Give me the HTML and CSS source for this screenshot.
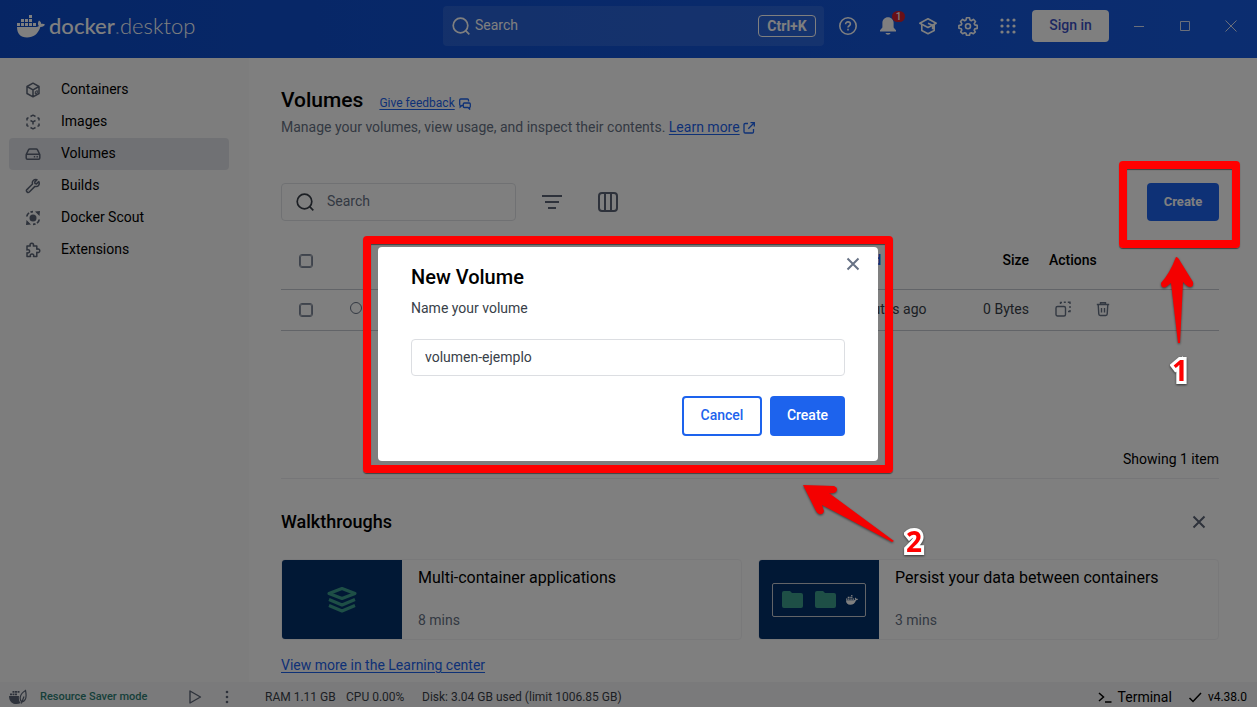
FILE: index.html
```html
<!DOCTYPE html>
<html lang="en">
<head>
<meta charset="utf-8">
<title>Docker Desktop - Volumes</title>
<link rel="stylesheet" href="styles.css">
</head>
<body>
<svg class="defs" aria-hidden="true">
  <defs>
    <symbol id="whale" viewBox="0 0 28 23">
      <path d="M12 0h3v3h-3zM4 4h3v3H4zM8 4h3v3H8zM12 4h3v3h-3zM0 8h3v3H0zM4 8h3v3H4zM8 8h3v3H8zM12 8h3v3h-3zM16 8h3v3h-3z"/>
      <path d="M0 12h18.500c1.500 0 2.600-.4 3.300-1-1.200-1.700-1-4 .2-5.500 1.400.9 2.200 2 2.300 3.500 1.400-.3 2.700-.1 3.700.6-.8 1.700-2.300 2.500-4.600 2.400C21 19 16.500 22.500 10 22.500 3.500 22.500 0 18.500 0 12z"/>
    </symbol>
    <symbol id="search" viewBox="0 0 18 18"><g fill="none" stroke="currentColor" stroke-width="1.700"><circle cx="8.500" cy="8.500" r="7.300"/><path d="M13.700 13.700l3.600 3.600"/></g></symbol>
    <symbol id="close" viewBox="0 0 14 14"><path d="M1.500 1.500l11 11M12.500 1.500l-11 11" fill="none" stroke="currentColor" stroke-width="2"/></symbol>
  </defs>
</svg>

<div class="app">
  <header class="topbar">
    <a class="brand" href="#"><svg class="brand-whale"><use href="#whale"/></svg><span class="brand-name"><b>docker</b><i>.</i>desktop</span></a>
    <label class="global-search">
      <svg class="icon18"><use href="#search"/></svg>
      <input type="text" placeholder="Search" aria-label="Search">
      <kbd>Ctrl+K</kbd>
    </label>
    <div class="top-actions">
      <button class="top-icon" aria-label="Help"><svg viewBox="0 0 20 20" fill="none" stroke="currentColor" stroke-width="1.600"><circle cx="10" cy="10" r="8.200"/><path d="M7.600 8.200c0-1.400 1-2.300 2.400-2.300s2.400.9 2.400 2.100c0 1.700-2.400 1.800-2.400 3.500"/><path d="M10 12.800v1.600"/></svg></button>
      <button class="top-icon" aria-label="Notifications"><svg viewBox="0 0 20 20" fill="currentColor"><path d="M10 1.200c-3.300 0-5.600 2.500-5.600 5.800v4.600L2 14.300V15.500h16v-1.200l-2.400-2.700V7c0-3.300-2.300-5.800-5.600-5.800zM7.500 17h5c-.3 1-1.200 1.700-2.500 1.700S7.800 18 7.500 17z"/></svg><span class="badge">1</span></button>
      <button class="top-icon" aria-label="Learning center"><svg viewBox="0 0 20 20" fill="none" stroke="currentColor" stroke-width="1.600" stroke-linejoin="round"><path d="M10 2.800L1.800 7.200 10 11.500l8.200-4.300z"/><path d="M3.800 8.500v6L10 17.700l6.200-3.200v-6M10 7.200l4.600 2v4"/></svg></button>
      <button class="top-icon" aria-label="Settings"><svg viewBox="0 0 20 20" fill="none" stroke="currentColor" stroke-width="1.600" stroke-linejoin="round"><path d="M8.500 1.700h3l.5 2.400 1.300.6 2.100-1.300 2.100 2.100-1.300 2.100.6 1.300 2.400.5v3l-2.400.5-.6 1.300 1.100 1.700-1.900 1.900-2.100-1.100-1.300.5-.5 2.200h-3l-.5-2.200-1.300-.5-2.100 1.100-1.900-1.900 1.100-1.900-.5-1.200-2.400-.5v-2.800l2.400-.6.5-1.300-1.300-2.100 2.100-2.100 2.100 1.300 1.300-.6z"/><circle cx="10" cy="10.300" r="2.500"/></svg></button>
      <button class="top-icon" aria-label="Apps"><svg viewBox="0 0 20 20" fill="currentColor"><g id="dots"><circle cx="4" cy="4" r="1.600"/><circle cx="10" cy="4" r="1.600"/><circle cx="16" cy="4" r="1.600"/></g><use href="#dots" y="6"/><use href="#dots" y="12"/></svg></button>
    </div>
    <button class="sign-in">Sign in</button>
    <div class="window-controls">
      <button aria-label="Minimize"><svg viewBox="0 0 12 12"><path d="M1 6.500h10"/></svg></button>
      <button aria-label="Maximize"><svg viewBox="0 0 12 12"><path d="M1.500 1.500h9v9h-9z"/></svg></button>
      <button aria-label="Close window"><svg viewBox="0 0 12 12"><path d="M.5 .5l11 11M11.500 .5l-11 11"/></svg></button>
    </div>
  </header>

  <div class="body">
    <nav class="sidebar">
      <a href="#"><svg viewBox="0 0 16 16"><path d="M8 1.200l6 3.300v7L8 14.800l-6-3.300v-7zM2 4.500l6 3.300 6-3.300M8 7.800v7"/><path d="M10.300 9.700l2-1.100v2.300l-2 1.100z" stroke-width="1"/></svg>Containers</a>
      <a href="#"><svg viewBox="0 0 16 16"><path d="M5.500 2.500L8 1.200l2.500 1.300M12.500 3.700L14 4.500v2M14 9.500v2l-1.500.8M10.500 13.500L8 14.800l-2.500-1.300M3.500 12.300L2 11.500v-2M2 6.500v-2l1.500-.8M5.500 6.500L8 7.800l2.500-1.300M8 7.800v2.700"/></svg>Images</a>
      <a href="#" class="active"><svg viewBox="0 0 16 16"><path d="M1.200 8.500l2.300-4.700c.3-.6.700-.8 1.300-.8h6.400c.6 0 1 .2 1.300.8l2.300 4.700v3.500c0 .8-.4 1.200-1.200 1.200H2.400c-.8 0-1.200-.4-1.200-1.200zM1.200 8.300h13.600M8.800 10.800h1.400M11.500 10.800h1.400"/></svg>Volumes</a>
      <a href="#"><svg viewBox="0 0 16 16"><path d="M13.800 3.600l-2.300 2.300-1.500-.3-.3-1.500L12 1.800c-3-1-5.300 1.300-4.500 4.200l-5.600 5.600c-1.400 1.500.9 3.800 2.400 2.400l5.600-5.600c3 .9 5.300-1.800 3.900-4.800z"/><path d="M3.300 12.600h.2"/></svg>Builds</a>
      <a href="#"><svg viewBox="0 0 16 16"><circle cx="8" cy="8" r="3.500" fill="currentColor" stroke="none"/><path d="M1.800 6.500C2 5 2.800 3.800 4 2.900M5.500 2.100C6.300 1.800 7 1.700 8 1.700M14.200 9.500c-.2 1.500-1 2.700-2.200 3.600M10.500 13.900c-.8.300-1.500.4-2.500.4" stroke-width="1.800"/><path d="M10 1.500l5-.5-.5 5zM1 15l.5-5L6 14.500z" fill="currentColor" stroke="none"/></svg>Docker Scout</a>
      <a href="#"><svg viewBox="0 0 16 16"><path d="M2 4h3.300c-.7-1.600.2-2.800 1.500-2.800S9 2.400 8.300 4h3.500v3.300c1.700-.7 3 .1 3 1.500s-1.300 2.200-3 1.500v4.200H8.500c.6-1.500-.2-2.500-1.500-2.500s-2.100 1-1.500 2.500H2v-3.700c1.600.5 2.600-.3 2.600-1.500S3.600 7.300 2 7.900z"/></svg>Extensions</a>
    </nav>

    <main class="content">
      <div class="title-row"><h1>Volumes</h1><a class="feedback" href="#">Give feedback</a><svg class="icon12" viewBox="0 0 12 12"><path d="M3.800 7.500H2.800L1.200 9V7.500Q.7 7 .7 6.500V2Q.7 1 1.700 1H8.500q1 0 1 1v1.500M5.300 5h5q1 0 1 1v2.500q0 .8-.7 1v1.600L9 9.500H5.300q-1 0-1-1V6q0-1 1-1z"/></svg></div>
      <p class="subtitle">Manage your volumes, view usage, and inspect their contents. <a href="#">Learn more</a> <svg class="icon12" viewBox="0 0 12 12"><path d="M5 1.500H2.200C1.400 1.500 1 2 1 2.600v7.200c0 .8.400 1.200 1.200 1.200h7.200c.7 0 1.100-.4 1.100-1.200V7M7.500.7h3.800v3.800M11 1L5.300 6.700"/></svg></p>

      <div class="toolbar">
        <label class="filter-search"><svg class="icon18"><use href="#search"/></svg><input type="text" placeholder="Search" aria-label="Search volumes"></label>
        <button class="tool" aria-label="Filter"><svg viewBox="0 0 20 20"><path d="M0 4h20M3 10h14M6 16h8"/></svg></button>
        <button class="tool" aria-label="Columns"><svg viewBox="0 0 20 20"><rect x="1" y="1" width="18" height="18" rx="3"/><path d="M7 1v18M13 1v18"/></svg></button>
        <div class="create-wrap">
          <button class="create-main">Create</button>
          <div class="mark mark-one">
            <svg class="arrow-up" viewBox="0 0 40 90" aria-hidden="true"><path d="M16 2Q18 2 20 6L33 27Q34 32 30 32Q28 32 26 30L23 27L20 88H18L11 28L6 32Q1 34 1 28Q10 18 16 2z"/></svg>
            <span class="digit">1</span>
          </div>
        </div>
      </div>

      <table class="volumes">
        <colgroup><col class="c-check"><col class="c-status"><col><col class="c-created"><col class="c-size"><col class="c-actions"></colgroup>
        <thead><tr><th class="center"><input type="checkbox" aria-label="Select all"></th><th></th><th></th><th class="sorted">Created</th><th class="right">Size</th><th>Actions</th></tr></thead>
        <tbody><tr>
          <td class="center"><input type="checkbox" aria-label="Select volume"></td>
          <td class="center"><span class="status"></span></td><td></td>
          <td>32 minutes ago</td><td class="right">0 Bytes</td>
          <td><div class="row-actions">
            <button aria-label="Clone"><svg viewBox="0 0 16 16"><rect x="1" y="5.500" width="9.500" height="9.500" rx="1.500"/><path d="M5.500 3V1.500H7M8.800 1.200h2M12.800 1.200H15V3M15 5v2M15 9v1.500h-2"/></svg></button>
            <button aria-label="Delete"><svg viewBox="0 0 16 16"><path d="M1.800 3.500h12.400M5.500 3V1.700h5V3M3.200 3.500l.6 9.600c0 .9.600 1.400 1.400 1.400h5.600c.8 0 1.400-.5 1.400-1.400l.6-9.600M6.500 7v4.500M9.500 7v4.500"/></svg></button>
          </div></td>
        </tr></tbody>
      </table>
      <p class="count">Showing 1 item</p>

      <section class="walkthroughs">
        <div class="section-head"><h2>Walkthroughs</h2><button aria-label="Dismiss walkthroughs"><svg class="icon14"><use href="#close"/></svg></button></div>
        <div class="cards">
          <article class="card"><div class="art"><svg class="layers" viewBox="0 0 30 26"><path d="M15 1.500L28 6.500 15 11.500 2 6.500zM2 12.500l13 5.500 13-5.500M2 18.500L15 24l13-5.500"/></svg></div><div class="card-text"><h3>Multi-container applications</h3><p>8 mins</p></div></article>
          <article class="card"><div class="art"><div class="folders"><svg viewBox="0 0 21 17"><path d="M2 0h6l2 2h9q2 0 2 2v11q0 2-2 2H2q-2 0-2-2V2q0-2 2-2z"/></svg><svg viewBox="0 0 21 17"><path d="M2 0h6l2 2h9q2 0 2 2v11q0 2-2 2H2q-2 0-2-2V2q0-2 2-2z"/></svg><svg class="mini-whale"><use href="#whale"/></svg></div></div><div class="card-text"><h3>Persist your data between containers</h3><p>3 mins</p></div></article>
        </div>
        <a class="more" href="#">View more in the Learning center</a>
      </section>
    </main>
  </div>

  <footer class="statusbar">
    <div class="engine">
      <svg class="saver" viewBox="0 0 18 16"><path d="M0 7h10c-.5 4 .5 6 2 7-5 2.500-12 1-12-7zM1 4.500h2V6.300H1zM3.500 4.500h2V6.300h-2zM6 4.500h2V6.300H6zM3.500 2h2v1.800h-2zM6 2h2v1.800H6zM8.500 2h2v1.800h-2z" fill="currentColor"/><path d="M16.500 1.500c1.300 6 .3 10.500-3.500 11.500-3-2.500-2.500-8 3.500-11.500zM12.300 14.500l2.700-7" fill="none" stroke="currentColor" stroke-width="1.200"/></svg>
      <span class="mode">Resource Saver mode</span>
      <button aria-label="Start"><svg class="icon14" viewBox="0 0 14 14"><path d="M2 1l10.500 6L2 13z" fill="none" stroke="currentColor" stroke-width="1.400" stroke-linejoin="round"/></svg></button>
      <button aria-label="More"><svg class="icon14" viewBox="0 0 14 14" fill="currentColor"><circle cx="7" cy="2" r="1.300"/><circle cx="7" cy="7" r="1.300"/><circle cx="7" cy="12" r="1.300"/></svg></button>
    </div>
    <span class="ram">RAM 1.11 GB</span><span class="cpu">CPU 0.00%</span><span>Disk: 3.04 GB used (limit 1006.85 GB)</span>
    <div class="right-status">
      <button class="terminal"><svg class="icon14" viewBox="0 0 14 14"><path d="M1 3l4.500 4L1 11M7 12h6.500"/></svg>Terminal</button>
      <span class="version"><svg class="icon14" viewBox="0 0 14 14"><path d="M1.500 8l3.500 3.500L13 3"/></svg>v4.38.0</span>
    </div>
  </footer>
</div>

<div class="backdrop">
  <form class="modal" role="dialog" aria-labelledby="modal-title">
    <button type="button" class="modal-close" aria-label="Close"><svg class="icon14"><use href="#close"/></svg></button>
    <h2 id="modal-title">New Volume</h2>
    <label for="volume-name">Name your volume</label>
    <input id="volume-name" type="text" value="volumen-ejemplo">
    <div class="modal-actions"><button type="button" class="cancel">Cancel</button><button type="button" class="create">Create</button></div>
    <div class="mark mark-two">
      <svg class="arrow-left" viewBox="0 0 96 60" aria-hidden="true"><path d="M2 1L33 2Q38 4 35 8Q32 10 28 9L93 57L91 58L21 21L23 27Q22 31 18 30Q16 29 15 27z"/></svg>
      <span class="digit">2</span>
    </div>
  </form>
</div>
</body>
</html>
```

FILE: styles.css
```css
* { box-sizing: border-box; }
body, h1, h2, h3, p { margin: 0; }
body { font: 14px/20px Roboto, "Liberation Sans", sans-serif; color: #000; background: #fff; }
button, input { font: inherit; color: inherit; padding: 0; margin: 0; border: 0; background: none; }
button { display: inline-flex; align-items: center; justify-content: center; }
input { outline: 0; min-width: 0; }
svg { display: block; flex: none; }
a { color: #1d63ed; text-underline-offset: 2px; }
.defs { position: absolute; width: 0; height: 0; }
.icon18 { width: 18px; height: 18px; }
.icon14 { width: 14px; height: 14px; }
.icon12 { width: 12px; height: 12px; fill: none; stroke: #1d63ed; stroke-width: 1.300; }

.app { display: flex; flex-direction: column; min-height: 100vh; }

/* top bar */
.topbar { display: flex; align-items: center; height: 58px; padding: 0 20px 6px 17px; color: #fff; background: linear-gradient(90deg, #0c4bc9, #1d63ed 150%); }
.brand { display: flex; align-items: center; gap: 4px; flex: 1; color: #fff; text-decoration: none; }
.brand-whale { width: 28px; height: 23px; fill: currentColor; }
.brand-name { font: 300 22px/28px Lato, sans-serif; }
.brand-name b { font-weight: 500; }
.brand-name i { font-style: normal; color: #8fb3f5; }
.global-search { display: flex; align-items: center; gap: 5px; width: 381px; height: 40px; padding: 0 8px 0 9px; border-radius: 4px; background: rgba(255, 255, 255, .1); }
.global-search input { flex: 1; padding-bottom: 2px; }
.global-search input::placeholder { color: #fff; opacity: 1; }
kbd { width: 58px; border: 1px solid #fff; border-radius: 4px; font: 700 14px/20px Roboto, sans-serif; text-align: center; }
.top-actions { display: flex; gap: 20px; padding: 0 14px; }
.top-icon { position: relative; width: 20px; height: 20px; }
.top-icon svg { width: 20px; height: 20px; }
.badge { position: absolute; top: -5px; right: -7px; width: 13px; height: 11px; border-radius: 6px; background: #d2212f; font: 500 10px/11px Roboto, sans-serif; }
.sign-in { width: 77px; height: 32px; padding-bottom: 2px; border-radius: 4px; background: #fff; color: #3a4fc4; font-weight: 500; }
.window-controls { display: flex; gap: 34px; padding-left: 24px; }
.window-controls svg { width: 12px; height: 12px; fill: none; stroke: #d7dff5; stroke-width: 1; }

/* layout */
.body { display: flex; flex: 1; }
.sidebar { width: 249px; padding: 16px 20px 16px 9px; background: #fafafa; flex: none; }
.sidebar a { display: flex; align-items: center; gap: 20px; height: 32px; padding: 0 16px 2px; border-radius: 4px; color: #000; text-decoration: none; }
.sidebar svg { width: 16px; height: 16px; margin-top: 2px; fill: none; stroke: currentColor; stroke-width: 1.500; stroke-linejoin: round; color: #5c6577; }
.sidebar .active { background: #e1e3e8; }
.content { flex: 1; padding: 28px 38px 7px 32px; }

.title-row { display: flex; align-items: center; height: 28px; }
h1 { font-size: 21px; line-height: 28px; font-weight: 500; margin-right: 16px; }
.feedback { font-size: 12px; padding-top: 6px; margin-right: 4px; }
.title-row .icon12 { margin-top: 8px; }
.subtitle { margin-top: 3px; color: #677285; }
.subtitle svg { display: inline-block; vertical-align: -2px; }

.toolbar { display: flex; align-items: center; margin-top: 46px; }
.filter-search { display: flex; align-items: center; gap: 13px; width: 235px; height: 38px; padding: 0 14px; border: 1px solid #e1e2e6; border-radius: 4px; color: #393f49; }
.filter-search input { padding-bottom: 2px; }
.filter-search input::placeholder { color: #677285; opacity: 1; }
.tool { width: 20px; height: 20px; margin-left: 26px; color: #5c6577; }
.tool + .tool { margin-left: 36px; }
.tool svg { width: 20px; height: 20px; fill: none; stroke: currentColor; stroke-width: 2; }
.create-wrap { position: relative; margin-left: auto; }
.create-main { width: 72px; height: 38px; border-radius: 4px; background: #1d63ed; color: #fff; font-size: 13px; font-weight: 700; }

/* table */
.volumes { width: 100%; margin-top: 10px; border-collapse: separate; border-spacing: 0; table-layout: fixed; }
.c-check, .c-status { width: 50px; }
.c-created { width: 129px; }
.c-size { width: 90px; }
.c-actions { width: 170px; }
th, td { padding: 0; text-align: left; border-bottom: 1px solid #c4c8d1; font-weight: 400; }
th { height: 59px; font-weight: 500; }
td { height: 41px; padding-bottom: 2px; color: #393f49; }
.right { text-align: right; padding-right: 20px; }
.center { text-align: center; }
.sorted { color: #1d63ed; padding-left: 2px; }
input[type="checkbox"] { appearance: none; display: block; width: 14px; height: 14px; margin: 1px auto 0; border: 1px solid #7d8798; outline: 1px solid #8a93a3; outline-offset: -2px; border-radius: 3px; }
.status { display: block; width: 12px; height: 12px; margin: 0 auto 3px; border: 1px solid #677285; border-radius: 50%; }
.row-actions { display: flex; gap: 24px; padding-left: 6px; color: #677285; }
.row-actions svg { width: 16px; height: 16px; fill: none; stroke: currentColor; stroke-width: 1.400; }
.count { margin-top: 118px; padding-bottom: 9px; border-bottom: 1px solid #ededf0; text-align: right; }

/* walkthroughs */
.section-head { display: flex; align-items: center; justify-content: space-between; margin-top: 31px; padding-right: 13px; color: #5c6577; }
h2 { font-size: 18px; line-height: 24px; font-weight: 500; color: #000; }
.cards { display: grid; grid-template-columns: 1fr 1fr; gap: 16px; margin-top: 25px; }
.card { display: flex; height: 81px; border: 1px solid #f3f3f5; border-radius: 4px; overflow: hidden; }
.art { display: flex; align-items: center; justify-content: center; width: 120px; background: #03306b; flex: none; }
.layers { width: 30px; height: 26px; fill: none; stroke: #3c9f8d; stroke-width: 3; stroke-linejoin: round; }
.folders { display: flex; align-items: center; gap: 12px; width: 94px; height: 34px; padding: 0 8px 0 9px; border: 1px solid #c4c8d1; border-radius: 2px; fill: #3c9f8d; }
.folders svg { width: 21px; height: 17px; }
.folders .mini-whale { width: 12px; height: 10px; fill: #fff; margin-left: -2px; }
.card-text { display: flex; flex-direction: column; justify-content: space-between; padding: 8px 16px 9px; }
h3 { font-size: 16px; line-height: 20px; font-weight: 400; }
.card-text p { color: #677285; }
.more { display: inline-block; margin-top: 15px; }

/* status bar */
.statusbar { display: flex; align-items: center; height: 25px; padding: 5px 10px 0 9px; background: #f5f5f6; font-size: 12px; color: #393f49; }
.engine { display: flex; align-items: center; width: 256px; color: #5c6577; }
.saver { width: 18px; height: 16px; }
.mode { flex: 1; padding-left: 13px; color: #2e7f74; font-size: 11px; font-weight: 500; }
.engine button { margin-right: 18px; }
.engine button:last-child { margin-right: 31px; }
.ram { width: 81px; }
.cpu { width: 76px; }
.right-status { display: flex; align-items: center; gap: 16px; margin-left: auto; color: #000; }
.right-status svg { fill: none; stroke: currentColor; stroke-width: 1.500; }
.terminal { gap: 6px; font-size: 14px; }
.version { display: flex; align-items: center; gap: 6px; }

/* dialog */
.backdrop { position: fixed; inset: 0; z-index: 10; display: flex; align-items: center; justify-content: center; padding-right: 1px; background: rgba(0, 0, 0, .5); }
.modal { position: relative; width: 500px; padding: 18px 33px 25px; border-radius: 4px; background: #fff; }
.modal h2 { font-size: 20px; }
.modal label { display: block; margin: 9px 0 21px; color: #393f49; }
.modal input { display: block; width: 100%; height: 37px; padding: 0 13px; border: 1px solid #dcdee2; border-radius: 4px; color: #393f49; }
.modal-close { position: absolute; top: 10px; right: 18px; color: #677285; }
.modal-actions { display: flex; justify-content: flex-end; gap: 8px; margin-top: 20px; }
.modal-actions button { height: 40px; padding-bottom: 2px; border-radius: 4px; font-weight: 500; }
.cancel { width: 80px; border: 2px solid #1d63ed; color: #1d63ed; }
.create { width: 75px; background: #1d63ed; color: #fff; }

/* tutorial marks */
.mark { position: absolute; z-index: 30; border: 8px solid #f00; border-radius: 4px; pointer-events: none; box-shadow: 0 1px 1px rgba(0, 0, 0, .5), inset 0 1px 1px rgba(0, 0, 0, .5); }
.mark-one { inset: -22px -21px -27px -28px; }
.mark-two { inset: -11px -15px -12px; }
.mark svg { position: absolute; fill: #f40000; filter: drop-shadow(0 1px 1px rgba(0, 0, 0, .5)); }
.arrow-up { width: 40px; height: 90px; left: 33px; top: 86px; }
.arrow-left { width: 96px; height: 60px; left: 430px; top: 240px; }
.digit { position: absolute; font: 700 28px/32px "Open Sans", sans-serif; color: #f00; -webkit-text-stroke: 6px #fff; paint-order: stroke fill; stroke-linejoin: round; filter: drop-shadow(0 1px 1px rgba(0, 0, 0, .6)); }
.mark-one .digit { left: 45px; top: 185px; }
.mark-two .digit { left: 535px; top: 281px; }
```
